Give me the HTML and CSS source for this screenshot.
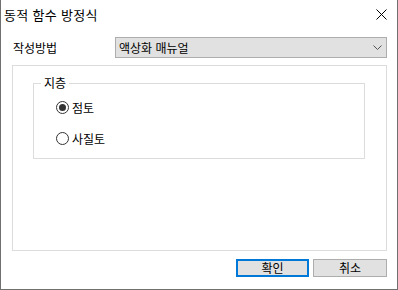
FILE: index.html
```html
<!DOCTYPE html>
<html lang="ko">
<head>
  <meta charset="UTF-8" />
  <title>동적 함수 방정식</title>
  <link rel="stylesheet" href="styles.css">
</head>
<body>
  <div class="window">
    <div class="titlebar">
      <span class="title">동적 함수 방정식</span>
      <span class="close">
        <svg width="11" height="11" viewBox="0 0 11 11"><path d="M0.5 0.5 L10.5 10.5 M10.5 0.5 L0.5 10.5" stroke="#000" stroke-width="1" fill="none"/></svg>
      </span>
    </div>
    <div class="content">
      <div class="field">
        <label class="field-label">작성방법</label>
        <div class="combo">
          <span>액상화 매뉴얼</span>
          <svg width="9" height="5" viewBox="0 0 9 5"><path d="M0.5 0.5 L4.5 4.5 L8.5 0.5" stroke="#555" stroke-width="1" fill="none"/></svg>
        </div>
      </div>
      <div class="panel">
        <fieldset class="group">
          <legend>지층</legend>
          <div class="options">
            <label class="radio checked"><span class="mark"></span>점토</label>
            <label class="radio"><span class="mark"></span>사질토</label>
          </div>
        </fieldset>
      </div>
      <div class="buttons">
        <button class="btn default">확인</button>
        <button class="btn cancel">취소</button>
      </div>
    </div>
  </div>
</body>
</html>
```

FILE: styles.css
```css
* {
  box-sizing: border-box;
}
body {
  margin: 0;
  background: #fff;
  font-family: "Noto Sans CJK KR", "Noto Sans", sans-serif;
  font-size: 12px;
  color: #000;
}
.window {
  width: 398px;
  height: 290px;
  border: 1px solid #707070;
  border-top: none;
  display: flex;
  flex-direction: column;
}
.titlebar {
  height: 30px;
  display: flex;
  align-items: center;
  justify-content: space-between;
  padding: 0 10px 2px 3px;
}
.title {
  font-size: 13px;
  letter-spacing: 0.3px;
}
.close {
  display: flex;
  width: 11px;
  height: 11px;
}
.content {
  flex: 1;
  display: flex;
  flex-direction: column;
  padding: 7px 10px 12px 11px;
}
.field {
  display: flex;
  align-items: center;
  height: 21px;
}
.field-label {
  width: 103px;
  padding-left: 1px;
}
.combo {
  flex: 1;
  height: 21px;
  display: flex;
  align-items: center;
  justify-content: space-between;
  padding: 0 4px 0 3px;
  border: 1px solid #adadad;
  background: #e1e1e1;
}
.panel {
  margin-top: 7px;
  height: 186px;
  border: 1px solid #dcdcdc;
  padding: 9px 21px 0 20px;
}
.group {
  margin: 0;
  padding: 0;
  height: 84px;
  border: 1px solid #dcdcdc;
}
.group legend {
  margin-left: 7px;
  padding: 0 3px;
  line-height: 16px;
}
.options {
  display: flex;
  flex-direction: column;
  gap: 15px;
  padding: 8px 0 0 22px;
}
.radio {
  display: flex;
  align-items: center;
  gap: 3px;
  height: 16px;
}
.mark {
  width: 13px;
  height: 13px;
  border: 1px solid #333;
  border-radius: 50%;
  display: flex;
  align-items: center;
  justify-content: center;
}
.radio.checked .mark::after {
  content: "";
  width: 7px;
  height: 7px;
  border-radius: 50%;
  background: #333;
}
.buttons {
  margin-top: 8px;
  display: flex;
  justify-content: flex-end;
  gap: 4px;
}
.btn {
  height: 18px;
  padding: 0;
  font: inherit;
  line-height: 14px;
  color: #000;
  background: #e1e1e1;
  border: 1px solid #adadad;
}
.btn.default {
  width: 73px;
  border: 2px solid #0078d7;
}
.btn.cancel {
  width: 74px;
}
```
